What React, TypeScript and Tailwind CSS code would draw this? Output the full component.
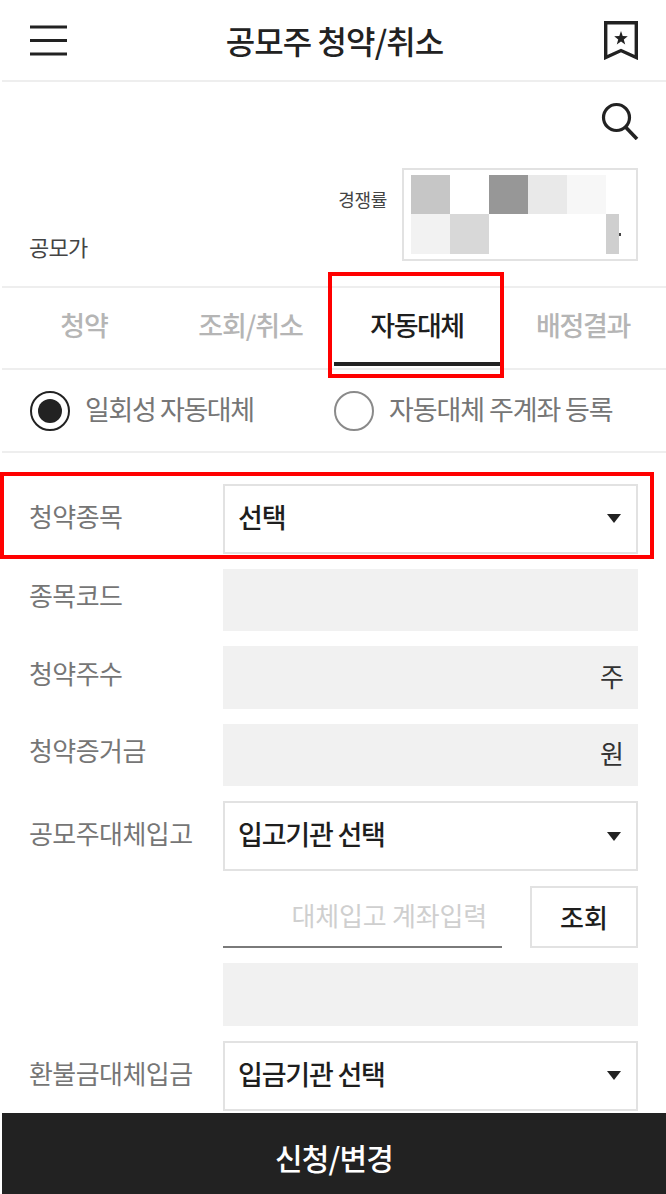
const fontStack = { fontFamily: '"Noto Sans CJK KR", sans-serif' };

function Arrow() {
  return (
    <svg width="16" height="11" viewBox="0 0 16 11" className="shrink-0">
      <path d="M1 1 H15 L8 10 Z" fill="#222222" />
    </svg>
  );
}

function Row({ label, children, className = "", flat = false }: { label?: string; children: React.ReactNode; className?: string; flat?: boolean }) {
  return (
    <div className={`flex ${className}`}>
      <div className={`w-[221px] shrink-0 self-center pl-[27px] text-[26px] tracking-[-0.55px] leading-[36px] text-[#767676] whitespace-nowrap ${flat ? "pb-[9px]" : "pb-[6px]"}`}>
        {label}
      </div>
      <div className="w-[415px] shrink-0">{children}</div>
    </div>
  );
}

function Select({ text }: { text: string }) {
  return (
    <div className="h-[70px] border-2 border-[#e2e2e2] flex items-center justify-between pl-[13px] pr-[14px] bg-white">
      <span className="text-[27px] font-medium tracking-[-1.2px] text-[#1e1e1e] pb-[3px]">{text}</span>
      <Arrow />
    </div>
  );
}

function ReadOnly({ unit }: { unit?: string }) {
  return (
    <div className="h-[62.5px] bg-[#f1f1f1] flex items-center justify-end pr-[14px] pb-[4px] text-[26px] text-[#333333]">
      {unit}
    </div>
  );
}

const cells = [
  ["w-[39px] bg-[#c6c6c6]", "w-[39px] bg-white", "w-[39px] bg-[#979797]", "w-[39px] bg-[#e9e9e9]", "w-[39px] bg-[#f7f7f7]"],
  ["w-[39px] bg-[#f2f2f2]", "w-[39px] bg-[#d8d8d8]", "w-[117px] bg-white", "w-[13px] bg-[#cfcfcf]", "w-[2px] h-[3px] bg-[#444444] self-center"],
];

export default function App() {
  return (
    <div style={fontStack} className="relative w-[666px] h-[1194px] overflow-hidden bg-white pl-[2px]">
      <header className="h-[82px] border-b-2 border-[#eeeeee] flex items-center justify-between pl-[28px] pr-[28px]">
        <svg width="37" height="31" viewBox="0 0 37 31" className="mt-[1px]">
          <path d="M0 2 H37 M0 15.5 H37 M0 29 H37" fill="none" stroke="#222222" strokeWidth="3.2" />
        </svg>
        <h1 className="text-[32px] font-medium tracking-[-0.9px] text-[#222222] -ml-[2px]">공모주 청약/취소</h1>
        <svg width="34" height="39" viewBox="0 0 34 39" className="mt-[1px]">
          <path d="M1.7 1.7 H32.3 V36.5 L17 29.5 L1.7 36.5 Z" fill="none" stroke="#222222" strokeWidth="3.4" />
          <path d="M17 10 L18.7 15 L23.8 15.2 L19.8 18.4 L21.2 23.4 L17 20.5 L12.8 23.4 L14.2 18.4 L10.2 15.2 L15.3 15 Z" fill="#222222" />
        </svg>
      </header>

      <section className="h-[204px]">
        <div className="flex justify-end pt-[20px] pr-[27px]">
          <svg width="38" height="38" viewBox="0 0 38 38">
            <circle cx="15.5" cy="15.5" r="13" fill="none" stroke="#222222" strokeWidth="3.2" />
            <path d="M24.5 25 L36 37" fill="none" stroke="#222222" strokeWidth="3.6" />
          </svg>
        </div>
        <div className="flex justify-between items-end mt-[28px] pl-[27px] pr-[26px]">
          <span className="text-[22px] tracking-[-0.7px] text-[#444444] leading-[30px]">공모가</span>
          <div className="flex items-center gap-[15px]">
            <span className="text-[18px] tracking-[-0.35px] text-[#444444] mb-[30px]">경쟁률</span>
            <div className="w-[236px] h-[93px] border-2 border-[#e2e2e2] pl-[7px] pt-[5px] mr-[2px]">
              {cells.map((row, i) => (
                <div key={i} className={`flex ${i === 0 ? "h-[39px]" : "h-[40px]"}`}>
                  {row.map((c, j) => (
                    <div key={j} className={c} />
                  ))}
                </div>
              ))}
            </div>
          </div>
        </div>
      </section>

      <nav className="h-[84px] border-y-2 border-[#eeeeee] flex items-stretch text-[27px] tracking-[-1.1px] font-medium text-[#b5b5b5]">
        <div className="w-[165px] flex items-center justify-center pr-[1px] pb-[6px]">청약</div>
        <div className="w-[167px] flex items-center justify-center pb-[6px]">조회/취소</div>
        <div className="w-[166px] flex items-center justify-center border-b-4 border-[#222222] text-[#1e1e1e] tracking-[-1.5px] -mb-[2px] h-[78px] pt-[1px]">자동대체</div>
        <div className="flex-1 flex items-center justify-center pb-[6px] tracking-[-1.3px]">배정결과</div>
      </nav>

      <div className="h-[83px] border-b-2 border-[#eeeeee] flex items-center text-[27px] tracking-[-1.1px] text-[#767676]">
        <div className="w-[304px] pl-[28px] flex items-center gap-[15px]">
          <div className="w-[40px] h-[40px] rounded-full border-2 border-[#222222] flex items-center justify-center shrink-0">
            <div className="w-[24px] h-[24px] rounded-full bg-[#222222]" />
          </div>
          <span className="whitespace-nowrap pb-[3px] tracking-[-1.4px]">일회성 자동대체</span>
        </div>
        <div className="flex items-center gap-[15px] pl-[28px]">
          <div className="w-[40px] h-[40px] rounded-full border-2 border-[#8a8a8a] shrink-0" />
          <span className="whitespace-nowrap pb-[3px]">자동대체 주계좌 등록</span>
        </div>
      </div>

      <div className="pt-[30.5px] flex flex-col">
        <Row label="청약종목" className="mb-[15px]"><Select text="선택" /></Row>
        <Row label="종목코드" flat className="mb-[15px]"><ReadOnly /></Row>
        <Row label="청약주수" flat className="mb-[15px]"><ReadOnly unit="주" /></Row>
        <Row label="청약증거금" flat className="mb-[15px]"><ReadOnly unit="원" /></Row>
        <Row label="공모주대체입고" className="mb-[15px]"><Select text="입고기관 선택" /></Row>
        <Row className="mb-[15px]">
          <div className="flex justify-between h-[62px]">
            <div className="w-[279px] border-b-2 border-[#7a7a7a] flex items-center justify-end pr-[15px] pb-[3px] text-[26px] tracking-[-0.2px] text-[#cfcfcf]">
              대체입고 계좌입력
            </div>
            <div className="w-[108px] border-2 border-[#e2e2e2] flex items-center justify-center text-[26px] font-medium text-[#1e1e1e] pb-[2px]">
              조회
            </div>
          </div>
        </Row>
        <Row className="mb-[15px]"><ReadOnly /></Row>
        <Row label="환불금대체입금"><Select text="입금기관 선택" /></Row>
      </div>

      <button className="absolute left-[2px] right-0 bottom-0 h-[81px] bg-[#222222] text-white text-[30px] font-medium tracking-[-0.8px] pt-[8px]">
        신청/변경
      </button>

      <div className="absolute left-[328px] top-[272px] w-[176px] h-[106px] border-4 border-[#ff0000]" />
      <div className="absolute left-0 top-[472px] w-[654px] h-[87px] border-4 border-[#ff0000]" />
    </div>
  );
}
